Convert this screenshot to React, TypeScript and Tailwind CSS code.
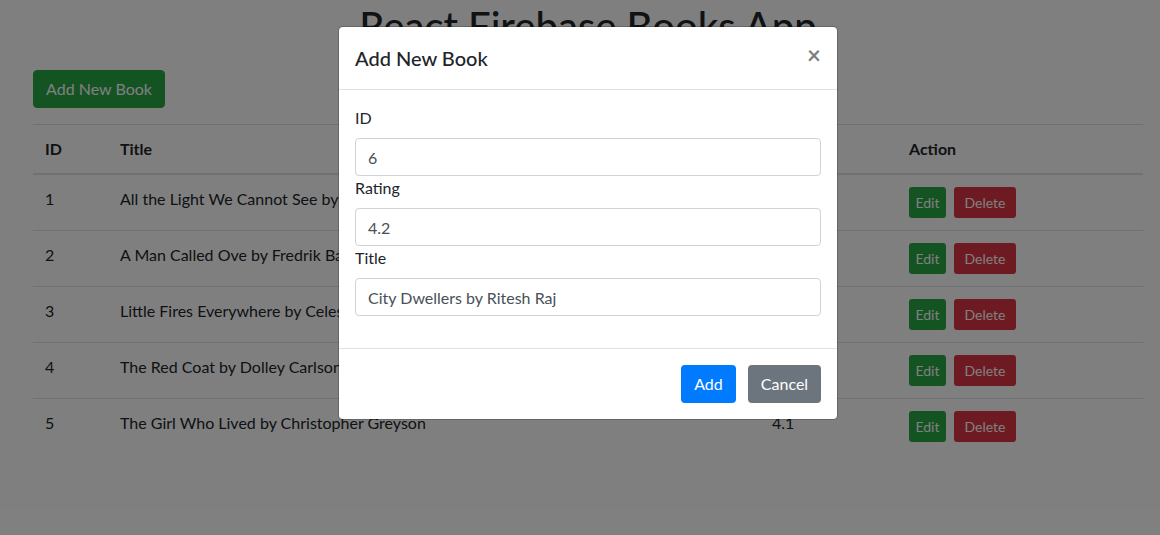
const books = [
  { id: 1, title: "All the Light We Cannot See by Anthony Doerr", rating: "4.3" },
  { id: 2, title: "A Man Called Ove by Fredrik Backman", rating: "4.4" },
  { id: 3, title: "Little Fires Everywhere by Celeste Ng", rating: "4.0" },
  { id: 4, title: "The Red Coat by Dolley Carlson", rating: "3.9" },
  { id: 5, title: "The Girl Who Lived by Christopher Greyson", rating: "4.1" },
];

function Field({ label, value }: { label: string; value: string }) {
  return (
    <div>
      <label className="mb-2 block leading-6">{label}</label>
      <input
        readOnly
        value={value}
        className="block h-[38px] w-full rounded-[0.25rem] border border-[#ced4da] bg-white px-3 text-base leading-6 text-[#495057] outline-none"
      />
    </div>
  );
}

export default function App() {
  return (
    <div className="relative h-[535px] w-[1160px] overflow-hidden bg-white font-[Lato,sans-serif] text-base text-[#212529]">
      <div className="ml-[33px] w-[1110px]">
        <h1 className="mb-[20px] pt-[2px] text-center text-[40px] font-medium leading-[1.2]">
          React Firebase Books App
        </h1>
        <button className="h-[38px] w-[132px] rounded-[0.25rem] border border-[#28a745] bg-[#28a745] text-base leading-6 text-white">
          Add New Book
        </button>

        <table className="mt-4 w-full border-collapse text-left">
          <thead>
            <tr>
              <th className="w-[75px] border-t border-b-2 border-[#dee2e6] p-3 font-bold leading-6">ID</th>
              <th className="w-[652px] border-t border-b-2 border-[#dee2e6] p-3 font-bold leading-6">Title</th>
              <th className="w-[137px] border-t border-b-2 border-[#dee2e6] p-3 font-bold leading-6">Rating</th>
              <th className="border-t border-b-2 border-[#dee2e6] p-3 font-bold leading-6">Action</th>
            </tr>
          </thead>
          <tbody>
            {books.map((b) => (
              <tr key={b.id}>
                <td className="border-t border-[#dee2e6] p-3 align-top leading-6">{b.id}</td>
                <td className="border-t border-[#dee2e6] p-3 align-top leading-6">{b.title}</td>
                <td className="border-t border-[#dee2e6] p-3 align-top leading-6">{b.rating}</td>
                <td className="border-t border-[#dee2e6] p-3 align-top leading-6">
                  <div className="flex gap-2">
                    <button className="h-[31px] w-[37px] rounded-[0.2rem] bg-[#28a745] text-sm text-white">Edit</button>
                    <button className="h-[31px] w-[62px] rounded-[0.2rem] bg-[#dc3545] text-sm text-white">Delete</button>
                  </div>
                </td>
              </tr>
            ))}
          </tbody>
        </table>
      </div>

      {/* backdrop */}
      <div className="absolute inset-0 bg-black/50" />

      <div className="absolute left-[338px] top-[26px] w-[500px] rounded-[0.3rem] border border-black/20 bg-white bg-clip-padding">
        <div className="flex items-start justify-between border-b border-[#dee2e6] p-4">
          <h5 className="text-xl font-medium leading-[1.5]">Add New Book</h5>
          <button className="-m-4 ml-auto p-4 text-2xl font-bold leading-none text-black opacity-50">×</button>
        </div>
        <div className="p-4">
          <form className="mb-4">
            <Field label="ID" value="6" />
            <Field label="Rating" value="4.2" />
            <Field label="Title" value="City Dwellers by Ritesh Raj" />
          </form>
        </div>
        <div className="flex items-center justify-end gap-3 border-t border-[#dee2e6] p-4">
          <button className="h-[38px] w-[55px] rounded-[0.25rem] bg-[#007bff] text-base text-white">Add</button>
          <button className="h-[38px] w-[73px] rounded-[0.25rem] bg-[#6c757d] text-base text-white">Cancel</button>
        </div>
      </div>
    </div>
  );
}
